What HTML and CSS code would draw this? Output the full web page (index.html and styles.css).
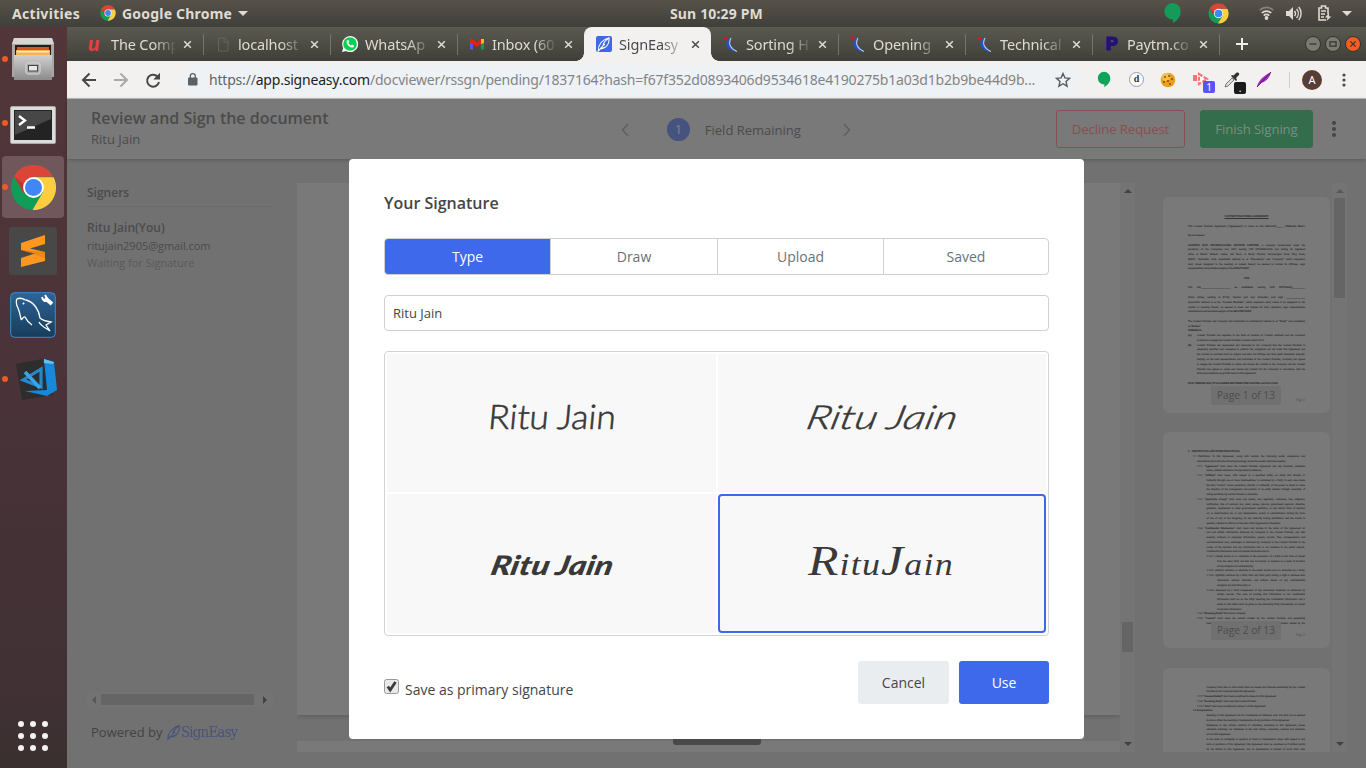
FILE: index.html
```html
<!DOCTYPE html>
<html lang="en">
<head>
<meta charset="utf-8">
<title>SignEasy</title>
<link rel="stylesheet" href="styles.css">
</head>
<body>
<svg width="0" height="0" class="defs">
  <symbol id="chrome" viewBox="0 0 48 48">
    <circle cx="24" cy="24" r="23" fill="#109d58"/>
    <path d="M24 24 4 12.500A23 23 0 0 1 44 13H24z" fill="#dc4437"/>
    <path d="M4 12.500 14 30 24 13z" fill="#dc4437"/>
    <path d="M44.500 13.500A23 23 0 0 1 23 47L34 28 24 13.500z" fill="#ffcd40"/>
    <path d="M4 12.500 14.500 30 16 22z" fill="#b33a2e"/>
    <circle cx="24" cy="24" r="10.600" fill="#fff"/><circle cx="24" cy="24" r="8.700" fill="#4285f4"/>
  </symbol>
  <symbol id="x" viewBox="0 0 10 10"><path d="M1.300 1.300 8.700 8.700M8.700 1.300 1.300 8.700" fill="none" stroke="currentColor" stroke-width="1.700"/></symbol>
  <symbol id="hang" viewBox="0 0 20 24"><path d="M10 1a9 9 0 0 1 9 9.300C19 16 15 20 10.500 23v-3.800A9.100 9.100 0 0 1 10 1z"/></symbol>
  <symbol id="moon" viewBox="0 0 16 16"><path d="M7 2C1 7 4 14 13 15.500 8 12 5 8 7 2z" fill="#2452c9" stroke="#2452c9" stroke-width="1"/><path d="M8 2C4.500 8 8 13 14 15.500" fill="none" stroke="#b9cdf2" stroke-width="1.100"/><path d="m2.500 0 .8 1.500H5L3.800 2.600 4.500 4.500 2.500 3.500.7 4.500 1.200 2.600 0 1.500h1.700z" fill="#e3131c"/></symbol>
  <symbol id="feather" viewBox="0 0 16 18"><path d="M1 17C1 11 4 4 14 1c1 8-4 13-10 13L1 17zM1 17l7-8M14 1C9 5 7 7 7 9M4 14c2-1 4-1 6-2" fill="none" stroke="currentColor" stroke-width="1.300"/><circle cx="8" cy="9" r="1.300" fill="currentColor"/></symbol>
</svg>

<header class="topbar">
  <span class="activities">Activities</span>
  <svg class="app-icon" width="16" height="16"><use href="#chrome"/></svg>
  <span class="app-name">Google Chrome</span><i class="caret"></i>
  <span class="clock">Sun 10:29 PM</span>
  <div class="tray">
    <svg class="t-hang" width="19" height="22"><use href="#hang"/></svg>
    <svg class="t-chrome" width="21" height="21"><use href="#chrome"/></svg>
    <svg class="t-wifi" width="15" height="14" viewBox="0 0 15 14"><g fill="none" stroke-width="1.700"><path d="M.8 4.200a9.500 9.500 0 0 1 13.400 0" stroke="#85837d"/><path d="M2.800 7a6.700 6.700 0 0 1 9.400 0M4.700 9.600a4 4 0 0 1 5.600 0" stroke="#dfdbd2"/></g><circle cx="7.500" cy="12" r="1.900" fill="#dfdbd2"/></svg>
    <svg class="t-vol" width="16" height="15" viewBox="0 0 16 15"><path d="M0 5h3l4-4v13L3 10H0z" fill="#dfdbd2"/><path d="M8.500 5a4 4 0 0 1 0 5M10.600 3a7 7 0 0 1 0 9M12.700 1a10 10 0 0 1 0 13" fill="none" stroke="#dfdbd2" stroke-width="1.400"/></svg>
    <svg class="t-bat" width="15" height="17" viewBox="0 0 15 17"><path d="M11 9V3H8.500V1h-4v2H2v12h7M4 6h5M4 9h4M4 12h3" fill="none" stroke="#dfdbd2" stroke-width="1.600"/><path d="m12 8-4 4.500h2.500L9.500 16l5-4.500H12z" fill="#dfdbd2"/></svg>
    <i class="caret"></i>
  </div>
</header>

<div class="desktop">
  <nav class="dock">
    <div class="slot run"><svg width="44" height="46" viewBox="0 0 44 46"><defs><linearGradient id="met" x2="0" y2="1"><stop stop-color="#d0d0d0"/><stop offset="1" stop-color="#8c8c8c"/></linearGradient></defs><path d="M3 2h38l2 6v33H1V8z" fill="#a8a8a8"/><path d="M3 2h38l2 6H1z" fill="#d6d6d6"/><path d="M4 9h36v11H4z" fill="#2b1a16"/><path d="M6 11h32v8H6z" fill="#d9541e"/><path d="M5 14h34v5H5z" fill="#f3b158"/><path d="M6 15h32v1.500H6z" fill="#fbe6c4"/><path d="M3 19h38v25H3z" fill="url(#met)"/><rect x="15" y="27" width="14" height="11" rx="2" fill="#aaa" stroke="#d9d9d9"/><rect x="17.500" y="29.500" width="9" height="5.500" fill="#e8e8e8" stroke="#444"/></svg></div>
    <div class="slot run term"><svg width="46" height="38" viewBox="0 0 46 38"><rect x=".5" y=".5" width="45" height="37" rx="1.500" fill="#dcdcdc" stroke="#aaa"/><path d="M4 4h38v30H4z" fill="#232323"/><path d="M5 5h36v8L5 29z" fill="#474747"/><path d="m9 10 6 4.500L9 19M17 21.500h8" fill="none" stroke="#fff" stroke-width="2.300"/></svg></div>
    <div class="slot run active"><svg width="47" height="47"><use href="#chrome"/></svg></div>
    <div class="slot"><svg width="48" height="48" viewBox="0 0 48 48"><rect width="48" height="48" rx="3" fill="#484848"/><path d="m12 16 24-8v9l-15 4.500L36 25v9l-24 6v-9l14-4.500L12 23z" fill="#ff9721"/><path d="m12 23 24 2v6z" fill="#d87810" opacity=".5"/></svg></div>
    <div class="slot"><svg width="46" height="46" viewBox="0 0 46 46"><defs><linearGradient id="my" x2="0" y2="1"><stop stop-color="#2d6497"/><stop offset="1" stop-color="#173c5a"/></linearGradient></defs><rect x=".7" y=".7" width="44.600" height="44.600" rx="4" fill="url(#my)" stroke="#3f8cc9"/><path d="M8 16c-2-3-2-8-1-9 3-2 6 0 9 1 8 2 13 10 14 18 2 2 5 3 11 4l-5 3 4 6c-6-4-9-5-11-9M8 16c2 5 2 7 3 11 1 2 2-3 4-2 2 4 4 6 7 8" fill="none" stroke="#fff" stroke-width="1.300"/><path d="M13 11l1 1" stroke="#fff" stroke-width="2"/><path d="m35 6 7 6" stroke="#fff" stroke-width="4"/><path d="M32 5c1 4 3 5 6 3L35 3" fill="none" stroke="#fff" stroke-width="2"/></svg></div>
    <div class="slot run"><svg width="44" height="44" viewBox="0 0 44 44"><path d="m3 7 26-5 11 36-31 5z" fill="#2d2d2e"/><path d="m10 23 18-11v18z" fill="none" stroke="#2489ca" stroke-width="3.200"/><path d="m12 15 15 16" stroke="#3ba2e8" stroke-width="3.600"/><path d="m31 2 10 3 3 28-10 6-22-5 22-1z" fill="#1689db"/><path d="m31 2 10 3-1 2-9-1z" fill="#67bdf5"/></svg></div>
    <div class="apps"><i></i><i></i><i></i><i></i><i></i><i></i><i></i><i></i><i></i></div>
  </nav>

  <section class="window">
    <div class="tabs">
      <div class="tab"><span class="fav udemy">u</span><span class="tt">The Comp</span><svg class="cl"><use href="#x"/></svg></div>
      <div class="tab"><svg class="fav" viewBox="0 0 16 16"><path d="M3.500 2h6l3.500 3.500V15H3.500zM9 2v4h4" fill="none" stroke="#65645e"/></svg><span class="tt">localhost</span><svg class="cl"><use href="#x"/></svg></div>
      <div class="tab"><svg class="fav" viewBox="0 0 16 16"><path d="m0 16 1.200-4A8 8 0 1 1 4 14.900z" fill="#fff"/><circle cx="8" cy="8" r="6.800" fill="#08cf4f"/><path d="M5 4.200c-1.800 3 2.500 8 6 7.300 1.500-.7 1-1.500.8-2L10 8.600l-1 1C8 9.300 6.800 8 6.500 7l.7-.9-.7-2z" fill="#fff"/></svg><span class="tt">WhatsAp</span><svg class="cl"><use href="#x"/></svg></div>
      <div class="tab nosep"><svg class="fav" viewBox="0 0 16 16"><path d="M1 4h3v9.500H1z" fill="#5a55ee"/><path d="M12 4h3v9.500h-3z" fill="#0c9c4c"/><path d="M1 3h2.500L8 6.500 12 3v5L8 11 1 6.500z" fill="#e51f13"/><path d="M12 3h3v4l-3 1z" fill="#fdba08"/></svg><span class="tt">Inbox (60</span><svg class="cl"><use href="#x"/></svg></div>
      <div class="tab on nosep"><span class="fav se"><svg width="14" height="15"><use href="#feather"/></svg></span><span class="tt">SignEasy</span><svg class="cl"><use href="#x"/></svg></div>
      <div class="tab"><svg class="fav"><use href="#moon"/></svg><span class="tt">Sorting H</span><svg class="cl"><use href="#x"/></svg></div>
      <div class="tab"><svg class="fav"><use href="#moon"/></svg><span class="tt">Opening</span><svg class="cl"><use href="#x"/></svg></div>
      <div class="tab"><svg class="fav"><use href="#moon"/></svg><span class="tt">Technical</span><svg class="cl"><use href="#x"/></svg></div>
      <div class="tab"><span class="fav paytm">P</span><span class="tt">Paytm.co</span><svg class="cl"><use href="#x"/></svg></div>
      <svg class="plus" width="12" height="12" viewBox="0 0 12 12"><path d="M6 0v12M0 6h12" stroke="#f0eee6" stroke-width="2"/></svg>
      <div class="winbtns"><i><svg viewBox="0 0 16 16"><path d="M4 8h8"/></svg></i><i><svg viewBox="0 0 16 16"><path d="M4.500 5.500h7v5h-7z"/></svg></i><i class="close"><svg viewBox="0 0 16 16"><path d="m5 5 6 6m0-6-6 6"/></svg></i></div>
    </div>

    <div class="toolbar">
      <svg class="nav" width="90" height="18" viewBox="0 0 90 18"><g fill="none" stroke-width="2"><path d="M15 9H2m6.500-6.500L2 9l6.500 6.500" stroke="#48474a"/><path d="M33 9h13m-6.500-6.500L46 9l-6.500 6.500" stroke="#aaa9a8"/><path d="M76.500 5.500A6 6 0 1 0 78 11" stroke="#48474a"/></g><path d="M79 1.800V8.500h-6.700z" fill="#48474a"/></svg>
      <div class="omni">
        <svg class="lock" width="10" height="13" viewBox="0 0 10 13"><rect y="4.500" width="9.500" height="8" rx="1" fill="#5f6063"/><path d="M2.300 5V3.200a2.500 2.500 0 0 1 5 0V5" fill="none" stroke="#5f6063" stroke-width="1.300"/></svg>
        <span class="url"><b class="s">https://</b><b>app.signeasy.com</b>/docviewer/rssgn/pending/1837164?hash=f67f352d0893406d9534618e4190275b1a03d1b2b9be44d9b...</span>
        <svg class="star" width="16" height="16" viewBox="0 0 16 16"><path d="m8 1.500 1.900 4.400 4.700.4L11 9.500l1.100 4.700L8 11.700l-4.100 2.500L5 9.500 1.400 6.300l4.700-.4z" fill="none" stroke="#5a5a5e" stroke-width="1.400"/></svg>
      </div>
      <div class="exts">
        <svg class="e-hang" width="14" height="17"><use href="#hang"/></svg>
        <span class="e-d">d</span>
        <svg width="16" height="16" viewBox="0 0 16 16"><circle cx="8" cy="8" r="7.300" fill="#e9a11c"/><circle cx="6" cy="5" r="4" fill="#f5c04b"/><g fill="#8a4a0a"><circle cx="5" cy="5" r="1"/><circle cx="9" cy="4" r="1"/><circle cx="12" cy="7" r="1.100"/><circle cx="8" cy="9" r="1.100"/><circle cx="4" cy="10" r="1"/><circle cx="10" cy="12" r="1"/></g></svg>
        <span class="badge-wrap"><svg width="18" height="14" viewBox="0 0 18 14"><path d="M1 3h4v6H1z" fill="#ff6e73"/><path d="m7 2 8 5-8 5z" fill="#fff" stroke="#ff6e73" stroke-width="2.200" stroke-dasharray="4 1.500"/></svg><em>1</em></span>
        <span class="badge-wrap"><svg width="16" height="16" viewBox="0 0 16 16"><path d="m1 15 1-3 6-6 2 2-6 6z" fill="#ddd" stroke="#777"/><path d="m7 4 5 5 1-1-1-2 3-3c1-2-1-3-3-2L9.500 3.500 8 3z" fill="#333"/></svg><em class="dark">.</em></span>
        <svg width="16" height="16" viewBox="0 0 16 16"><path d="M1 15C2 9 7 4 15 0c-1 6-6 10-10 11z" fill="#a32bc4"/><path d="M1 15 15 0" stroke="#5b1070"/></svg>
        <i class="vsep"></i><span class="avatar">A</span>
        <svg width="4" height="14" viewBox="0 0 4 14" fill="#48484a"><circle cx="2" cy="2" r="1.600"/><circle cx="2" cy="7" r="1.600"/><circle cx="2" cy="12" r="1.600"/></svg>
      </div>
    </div>

    <main class="page">
      <div class="head">
        <div class="heading"><h1>Review and Sign the document</h1><p>Ritu Jain</p></div>
        <div class="fields"><svg width="8" height="14" viewBox="0 0 8 14"><path d="M7 1 1.500 7 7 13"/></svg><b>1</b><span>Field Remaining</span><svg width="8" height="14" viewBox="0 0 8 14"><path d="m1 1 5.500 6L1 13"/></svg></div>
        <div class="actions"><span class="decline">Decline Request</span><span class="finish">Finish Signing</span><svg width="4" height="16" viewBox="0 0 4 16" fill="#454545"><circle cx="2" cy="2" r="2"/><circle cx="2" cy="8" r="2"/><circle cx="2" cy="14" r="2"/></svg></div>
      </div>
      <div class="cols">
        <aside class="signers">
          <h2>Signers</h2>
          <h3>Ritu Jain(You)</h3><p>ritujain2905@gmail.com</p><p class="wait">Waiting for Signature</p>
          <div class="hscroll"><i class="la"></i><i class="bar"></i><i class="ra"></i></div>
          <div class="powered">Powered by <svg width="14" height="17"><use href="#feather"/></svg><span>SignEasy</span></div>
        </aside>
        <div class="doc"><div class="sheet"></div><div class="sheet next"></div></div>
        <div class="vscroll d"><i class="ua"></i><i class="bar"></i><i class="da"></i></div>
        <div class="thumbs">
          <div class="thumb"><div class="txt">
            <p class="c b"><u>CONTENT PROVIDER AGREEMENT</u></p><p></p>
            <p class="j">This Content Provider Agreement ("<b>Agreement</b>") is made on this 08/03/2021_____ ("<b>Effective Date</b>")</p><p></p>
            <p>By and between:</p><p></p>
            <p class="j"><b>SORTING HAT TECHNOLOGIES PRIVATE LIMITED</b>, a company incorporated under the</p>
            <p class="j">provisions of the Companies Act, 2013 bearing CIN U72900KA2015 and having its registered</p>
            <p class="j">office at Maruti Infotech Centre, 3rd Floor, A Block, Domlur, Koramangala Inner Ring Road,</p>
            <p class="j">560071, Karnataka, India (hereinafter referred to as "Unacademy" and "Company" which expression</p>
            <p class="j">shall, unless repugnant to the meaning or context thereof, be deemed to include its affiliates, legal</p>
            <p>representatives and permitted assigns) of the <b>FIRST PART</b>;</p><p></p>
            <p class="c b">AND</p><p></p>
            <p class="j">Ritu Jain_______________________ <b>an individual</b>, bearing PAN BIFPJ4080Q__________</p><p></p>
            <p class="j">Indian citizen, residing at H-152, Jawahar puri near Ambedkar park Agra _______________</p>
            <p class="j">(hereinafter referred to as the "<b>Content Provider</b>", which expression shall, unless it be repugnant to the</p>
            <p class="j">context or meaning thereof, be deemed to mean and include his heirs, executors, legal representatives</p>
            <p>administrators and permitted assigns) of the <b>SECOND PART</b>.</p><p></p>
            <p class="j">The Content Provider and Company shall hereinafter be individually referred to as "<b>Party</b>" and collectively</p>
            <p>as "<b>Parties</b>".</p><p class="b">WHEREAS:</p>
            <p class="i1 j n" data-n="(A)">Content Provider has expertise in the field of creation of Content (defined) and the Company</p><p class="i1">is desirous to engage the Content Provider to create Content for it.</p>
            <p class="i1 j n" data-n="(B)">Content Provider has represented and warranted to the Company that the Content Provider is</p><p class="i1 j">adequately qualified and competent to perform the obligations set out under this Agreement and</p><p class="i1 j">the Content so provided shall be original and shall not infringe any third party intellectual property.</p><p class="i1 j">Relying on the said representations and warranties of the Content Provider, Company has agreed</p><p class="i1 j">to engage the Content Provider to create and license the Content to the Company and the Content</p><p class="i1 j">Provider has agreed to create and license the Content for the Company in accordance with the</p><p class="i1">terms and conditions as set forth below in this Agreement.</p><p></p>
            <p class="b">NOW THEREFORE, IT IS AGREED BETWEEN THE PARTIES AS FOLLOWS:</p>
          </div><span class="pn">Page |1</span><span class="label">Page 1 of 13</span></div>
          <div class="thumb"><div class="txt">
            <p class="b">1. &nbsp; DEFINITIONS AND INTERPRETATIONS</p>
            <p class="i0 j">1.1 Definitions: In this Agreement, along with recitals, the following words, expressions and</p><p class="i1">abbreviations shall have the following meanings, unless the context otherwise requires:</p>
            <p class="i1 j">1.1.1. "<b>Agreement</b>" shall mean the Content Provider Agreement and any annexure, schedules</p><p class="i2">hereto, whether attached or incorporated by reference;</p>
            <p class="i1 j">1.1.2. "<b>Affiliate</b>" shall mean, with respect to a specified entity, an entity that directly or</p><p class="i2 j">indirectly through one or more intermediaries, is controlled by a Party, in each case where</p><p class="i2 j">the term "control" means possession, directly or indirectly, of the power to direct or cause</p><p class="i2 j">the direction of the management and policies of an entity whether through ownership of</p><p class="i2">voting securities, by contract interest or otherwise.</p>
            <p class="i1 j">1.1.3. "<b>Applicable Law(s)</b>" shall mean any statute, law, regulation, ordinance, rule, judgment,</p><p class="i2 j">notification, rule of common law, order, decree, bye-law, government approval, directive,</p><p class="i2 j">guideline, requirement or other governmental restriction, or any similar form of decision</p><p class="i2 j">of, or determination by, or any interpretation, policy or administration having the force</p><p class="i2 j">of law of any of the foregoing, by any authority having jurisdiction over the matter in</p><p class="i2">question, whether in effect as of the date of this Agreement or thereafter;</p>
            <p class="i1 j">1.1.4. "<b>Confidential Information</b>" shall mean and include in the terms of this Agreement all</p><p class="i2 j">oral and written information disclosed by Company to the Content Provider, any data</p><p class="i2 j">material, business or employee information, papers, records, files, correspondence and</p><p class="i2 j">communications sent, exchanged or disclosed by Company to the Content Provider in the</p><p class="i2 j">course of the Services and any information that is not available in the public domain.</p><p class="i2">Confidential Information shall not include information that is</p>
            <p class="i2 j">1.1.4.1. already known to or otherwise in the possession of a Party at the time of receipt</p><p class="i3 j">from the other Party and that was not known or received as a result of violation</p><p class="i3">of any obligation of confidentiality;</p><p class="i2 j">1.1.4.2. publicly available or otherwise in the public domain prior to disclosure by a Party;</p><p class="i2 j">1.1.4.3. rightfully obtained by a Party from any third party having a right to disclose such</p><p class="i3 j">information without restriction and without breach of any confidentiality</p><p class="i3">obligation by such third party; or</p><p class="i2 j">1.1.4.4. developed by a Party independent of any disclosures hereunder as evidenced by</p><p class="i3 j">written records. The onus of proving that information is not Confidential</p><p class="i3 j">Information shall be on the Party receiving the Confidential Information and a</p><p class="i3 j">notice to this effect shall be given to the disclosing Party immediately on receipt</p><p class="i3">of any such information.</p>
            <p class="i1">1.1.5. "<b>Disclosing Party</b>" shall mean Company.</p><p class="i1 j">1.1.6. "<b>Content</b>" shall mean the content created by the Content Provider and perpetually</p><p class="i2 j">licensed to the Company in accordance with the terms, and information shared by the</p>
          </div><span class="pn">Page |2</span><span class="label">Page 2 of 13</span></div>
          <div class="thumb"><div class="txt">
            <p class="i2 j">Company from time to time which shall be created and licensed exclusively by the Content</p><p class="i2">Provider to the Company under this Agreement.</p><p class="i1">1.1.7. "<b>General Default</b>" shall mean as defined in clause 9 of this Agreement</p><p class="i1">1.1.8. "<b>Receiving Party</b>" shall mean the Content Provider</p><p class="i1">1.1.9. "<b>Term</b>" shall mean as defined in clause 11 of this Agreement</p><p class="i0 b">1.2 Interpretation</p>
            <p class="i2 j">Headings in this Agreement are for convenience of reference only and shall not be deemed</p><p class="i2">to alter or affect the meaning or interpretation of any provision of this Agreement.</p><p class="i2 j">References to any articles, sections of schedules, annexures to this Agreement, unless</p><p class="i2 j">otherwise indicated, are references to the said articles, annexures, sections and schedules</p><p class="i2">of or to this Agreement.</p><p class="i2 j">In the event an ambiguity or question of intent or interpretation arises with respect to any</p><p class="i2 j">term or provision of this Agreement, this Agreement shall be construed as if drafted jointly</p><p class="i2 j">by the Parties to this Agreement, and no presumption or burden of proof shall arise</p>
          </div></div>
        </div>
        <div class="vscroll t"><i class="ua"></i><i class="bar"></i><i class="da"></i></div>
      </div>
      <div class="grip"></div>

      <section class="modal">
        <h2>Your Signature</h2>
        <div class="modes"><span class="sel">Type</span><span>Draw</span><span>Upload</span><span>Saved</span></div>
        <div class="input">Ritu Jain</div>
        <div class="styles">
          <div class="cell"><span class="sig s1">Ritu Jain</span></div>
          <div class="cell"><span class="sig s2">Ritu Jain</span></div>
          <div class="cell"><span class="sig s3">Ritu Jain</span></div>
          <div class="cell chosen"><span class="sig s4"><b>R</b>itu<b>J</b>ain</span></div>
        </div>
        <div class="foot">
          <svg class="check" width="15" height="15" viewBox="0 0 15 15"><rect x=".5" y=".5" width="14" height="14" rx="2" fill="#e9e9e9" stroke="#999"/><path d="m3.800 7.500 2.400 3.500L11.500 3" fill="none" stroke="#3b3b3b" stroke-width="2.800"/></svg>
          <span class="save">Save as primary signature</span>
          <span class="btn cancel">Cancel</span><span class="btn use">Use</span>
        </div>
      </section>
    </main>
  </section>
</div>
</body>
</html>
```
FILE: styles.css
```css
* { box-sizing: border-box; }
body { margin: 0; width: 1366px; height: 768px; overflow: hidden; font-family: "Open Sans", sans-serif; display: flex; flex-direction: column; }
h1, h2, h3, p { margin: 0; }
.defs { position: absolute; }
svg { flex: none; display: block; }

.topbar { height: 27px; flex: none; display: flex; align-items: center; background: linear-gradient(#575249, #403f3a); color: #dfdbd2; font: bold 14px "Noto Sans", sans-serif; padding: 0 0 1px 12px; }
.activities { width: 88px; }
.app-icon { margin-right: 6px; }
.app-name { width: 110px; white-space: nowrap; letter-spacing: 0.2px; }
.caret { border: 5px solid transparent; border-top-color: #dfdbd2; border-bottom: 0; margin-left: 6px; }
.clock { margin-left: 422px; font-size: 14px; white-space: nowrap; letter-spacing: 0.15px; }
.activities { letter-spacing: 0.3px; }
.tray { margin-left: auto; display: flex; align-items: center; padding-right: 14px; }
.t-hang { fill: #149b59; margin-right: 26px; }
.t-chrome { margin-right: 30px; }
.t-wifi { margin-right: 12px; }
.t-vol { margin-right: 15px; }
.t-bat { margin-right: 4px; }

.desktop { flex: 1; display: flex; min-height: 0; }
.dock { width: 67px; flex: none; background: linear-gradient(#523639, #493339 50%, #3f3033 93%, #3a3030); display: flex; flex-direction: column; }
.slot { height: 64px; display: flex; align-items: center; justify-content: center; position: relative; padding-right: 1px; }
.slot:nth-child(6) { padding-left: 2px; padding-right: 0; }
.slot.run::before { content: ""; position: absolute; left: 2px; top: 29px; width: 6px; height: 6px; border-radius: 50%; background: #ee5a24; }
.slot.active { height: 62px; width: 62px; margin: 1px 0 1px 2px; padding: 0; background: #6f575c; border-radius: 4px; }
.slot.active::before { left: 0; top: 28px; }
.term svg { margin-top: 4px; }
.apps { margin: auto 0 17px 18px; display: grid; grid-template-columns: repeat(3, 6px); gap: 6px; }
.apps i { height: 6px; border-radius: 50%; background: #f4f2f2; }

.window { flex: 1; display: flex; flex-direction: column; min-width: 0; }
.tabs { height: 34px; flex: none; display: flex; padding-left: 9px; background: linear-gradient(#5b5a50, #3f3f39); color: #dfdbd2; font: 14.5px "Noto Sans", sans-serif; }
.tab { width: 127px; padding-left: 12px; display: flex; align-items: center; position: relative; }
.tab::after { content: ""; position: absolute; right: -1px; top: 7px; width: 1px; height: 21px; background: #75746c; }
.tab.nosep::after { display: none; }
.tab.on { background: #f2f1f0; color: #464b50; border-radius: 8px 8px 0 0; }
.tab.on::before { content: ""; position: absolute; left: -8px; right: -8px; bottom: 0; height: 8px; background: radial-gradient(circle at 0 0, transparent 7.5px, #f2f1f0 8px) 0 0 / 8px 8px no-repeat, radial-gradient(circle at 100% 0, transparent 7.5px, #f2f1f0 8px) 100% 0 / 8px 8px no-repeat; }
.fav { width: 16px; height: 16px; margin-right: 7px; flex: none; }
.udemy { color: #ee3a43; font: italic 900 21px/14px "Lato", sans-serif; }
.paytm { color: #20127a; font: 900 19px/16px "Roboto", sans-serif; text-align: center; -webkit-text-stroke: 1px; }
.se { background: #3e69e6; color: #fff; border-radius: 2px; padding: 1px; }
.tt { width: 66px; overflow: hidden; white-space: nowrap; letter-spacing: -0.15px; -webkit-mask-image: linear-gradient(90deg, #000 65%, transparent); mask-image: linear-gradient(90deg, #000 65%, transparent); }
.cl { width: 9px; height: 9px; margin-left: 6px; }
.plus { margin: 11px 0 0 17px; }
.winbtns { display: flex; gap: 4px; margin: 9px 0 0 57px; }
.winbtns i { width: 16px; height: 16px; border-radius: 50%; background: #7b7a73; border: 1px solid #33332e; }
.winbtns svg { width: 14px; height: 14px; fill: none; stroke: #34342f; stroke-width: 1.4; }
.winbtns .close { background: #f15d22; }

.toolbar { height: 38px; flex: none; background: #f2f1f0; border-bottom: 1px solid #bcbebe; display: flex; align-items: center; padding-left: 14px; }
.nav { margin-right: 10px; }
.omni { display: flex; align-items: center; width: 899px; height: 30px; background: #eff2f5; border-radius: 15px; padding-left: 7px; }
.lock { margin-right: 11px; }
.url { width: 830px; white-space: nowrap; overflow: hidden; color: #808489; font: 14px "Noto Sans", sans-serif; letter-spacing: -0.2px; }
.url b { font-weight: 400; color: #222; }
.url .s { color: #606468; }
.star { margin-left: 16px; }
.exts { display: flex; align-items: center; position: absolute; right: 20px; top: 61px; height: 37px; gap: 16px; }
.e-hang { fill: #0fa35b; margin-right: 2px; }
.e-d { width: 15px; height: 15px; border: 1px solid #a58fc2; border-radius: 50%; background: #fff; font: bold 10px/12px "Liberation Serif", serif; text-align: center; color: #333; }
.badge-wrap { width: 16px; height: 16px; position: relative; }
.badge-wrap em { position: absolute; left: 11px; top: 9px; width: 12px; height: 12px; border-radius: 2px; background: #5a52f5; color: #fff; font: 10px/12px "Noto Sans", sans-serif; text-align: center; }
.badge-wrap .dark { background: #1b1b1d; left: 10px; top: 10px; }
.vsep { width: 1px; height: 16px; background: #cfcfcf; margin-left: 1px; }
.avatar { width: 20px; height: 20px; margin: 0 4px 0 -4px; border-radius: 50%; background: #573d35; color: #fff; font: 11px/20px "Noto Sans", sans-serif; text-align: center; }

.page { flex: 1; min-height: 0; display: flex; flex-direction: column; background: #717171; color: #4b4b4b; position: relative; }
.head { height: 60px; flex: none; background: #797979; box-shadow: 0 1px 4px rgba(0,0,0,.22); display: flex; position: relative; }
.heading { width: 554px; padding: 8px 0 0 24px; }
.heading h1 { font-size: 16px; line-height: 22px; font-weight: 600; }
.heading p { font-size: 13px; line-height: 20px; }
.fields { display: flex; align-items: center; font-size: 13px; width: 230px; padding-top: 1px; }
.fields b { margin: 0 15px 0 38px; width: 23px; height: 23px; border-radius: 50%; background: #46537f; color: #828282; font-weight: 400; line-height: 23px; text-align: center; }
.fields span { width: 97px; white-space: nowrap; margin-right: 42px; }
.fields svg { fill: none; stroke: #606060; stroke-width: 1.6; }
.actions { display: flex; align-items: center; margin-left: auto; font-size: 13.2px; padding-right: 30px; }
.actions span { height: 38px; line-height: 36px; border-radius: 3px; text-align: center; border: 1px solid; white-space: nowrap; letter-spacing: -0.1px; }
.decline { width: 129px; color: #884f50; margin-right: 15px; }
.finish { width: 113px; color: #788f80; background: #346d4b; border-color: #346d4b !important; margin-right: 19px; }

.cols { flex: 1; min-height: 0; display: flex; padding-top: 24px; }
.signers { width: 230px; flex: none; padding: 0 24px 0 20px; display: flex; flex-direction: column; }
.signers h2 { font-size: 12px; line-height: 20px; font-weight: 600; padding-bottom: 3px; border-bottom: 1px solid #6b6b6b; margin-bottom: 12px; }
.signers h3 { font-size: 12px; line-height: 18px; font-weight: 600; }
.signers p { font-size: 11px; line-height: 17px; letter-spacing: -0.03px; }
.signers .wait { color: #5a5a5a; line-height: 18px; }
.hscroll { margin-top: 420px; height: 15px; background: #737373; display: flex; align-items: center; padding-left: 5px; }
.hscroll .bar { width: 153px; height: 11px; background: #656565; margin: 0 9px 0 5px; }
.la, .ra { border: 4px solid transparent; width: 0; height: 0; }
.la { border-right-color: #575757; border-left: 0; }
.ra { border-left-color: #414141; border-right: 0; }
.powered { display: flex; align-items: center; font-size: 13px; line-height: 20px; margin: 15px 0 0 4px; color: #434343; }
.powered svg { color: #48537d; margin-left: 5px; }
.powered span { font: 300 15.5px "DejaVu Serif", serif; color: #48537d; letter-spacing: -1px; transform: scaleX(.87); transform-origin: left; }
.doc { width: 823px; height: 569px; flex: none; overflow: hidden; }
.sheet { height: 532px; background: #797979; box-shadow: 0 2px 4px rgba(0,0,0,.15); margin-bottom: 26px; }
.sheet.next { height: 11px; box-shadow: none; }
.vscroll { width: 15px; height: 569px; flex: none; background: #747474; display: flex; flex-direction: column; align-items: center; padding: 6px 0; }
.vscroll .bar { width: 11px; background: #656565; }
.d .bar { height: 30px; margin-top: 429px; }
.t .bar { height: 100px; margin-top: 5px; }
.ua, .da { width: 0; height: 0; border: 4px solid transparent; }
.ua { border-bottom-color: #414141; border-top: 0; }
.t .ua { border-bottom-color: #585858; }
.da { border-top-color: #414141; border-bottom: 0; margin-top: auto; }
.thumbs { width: 197px; height: 569px; flex: none; padding: 14px 2px 0 28px; overflow: hidden; }
.thumb { height: 216px; margin-bottom: 19.3px; background: #797979; border-radius: 6px; position: relative; padding: 18px 25px 0; }
.txt { font: 2.55px/4.77px "Liberation Serif", serif; color: #343434; text-rendering: geometricPrecision; -webkit-text-stroke: .12px; }
.txt p { height: 4.77px; white-space: nowrap; }
.txt .j { white-space: normal; text-align: justify; text-align-last: justify; }
.txt .c { text-align: center; }
.txt .b { font-weight: bold; }
.i0 { padding-left: 5px; }
.i1 { padding-left: 9px; }
.i2 { padding-left: 18.5px; }
.i3 { padding-left: 29px; }
.n { position: relative; }
.n::before { content: attr(data-n); position: absolute; left: 0; top: 0; font-weight: bold; text-align-last: left; }
.label { position: absolute; left: 48px; bottom: 8px; width: 70px; height: 19px; border-radius: 3px; background: #707070; font-size: 10.2px; line-height: 19px; text-align: center; color: #4d4d4d; }
.pn { position: absolute; right: 25px; bottom: 11px; font: 3px "Liberation Serif", serif; }
.grip { position: absolute; left: 606px; top: 636px; width: 88px; height: 10px; border-radius: 3px; background: #494949; }

.modal { position: absolute; left: 282px; top: 60px; width: 735px; height: 580px; background: #fff; border-radius: 4px; padding: 32px 35px 35px; color: #454545; display: flex; flex-direction: column; }
.modal h2 { font-size: 16px; line-height: 24px; font-weight: 600; margin-bottom: 23px; }
.modes { display: grid; grid-template-columns: 165px 167px 166px 1fr; height: 37px; border: 1px solid #ced0d2; border-radius: 4px; overflow: hidden; flex: none; font-size: 14px; color: #66737b; }
.modes span { text-align: center; line-height: 36px; border-left: 1px solid #ced0d2; }
.modes .sel { background: #3e69eb; color: #fff; border-left: 0; }
.input { margin-top: 20px; height: 36px; flex: none; border: 1px solid #ced0d2; border-radius: 4px; padding-left: 8px; font-size: 13px; line-height: 34px; }
.styles { margin-top: 20px; height: 285px; flex: none; border: 1px solid #cfd4da; border-radius: 4px; padding: 2px; display: grid; grid-template-columns: 329px 328px; grid-template-rows: 138px 139px; gap: 2px; }
.cell { background: #f8f8f8; display: flex; align-items: center; justify-content: center; }
.chosen { border: 2px solid #3e69e6; border-radius: 4px; }
.sig { color: #393939; white-space: nowrap; font-style: italic; font-size: 34px; line-height: 40px; }
.s1 { font-family: "Lato", cursive; font-style: normal; font-weight: 300; transform: translate(1px, -7px) scaleX(1.04) skewX(-5deg); -webkit-text-stroke: .6px; }
.s2 { font-family: "Lato", cursive; font-weight: 300; transform: translate(1px, -7px) scaleX(1.32) skewX(-10deg); -webkit-text-stroke: .5px; font-size: 33px; }
.s3 { font-family: "Lato", cursive; font-weight: 900; font-size: 27px; transform: translate(1px, 1px) scaleX(1.23) skewX(-10deg); }
.s4 { font-family: "Liberation Serif", cursive; font-size: 31px; transform: translate(-1px, -1px) scaleX(1.16); letter-spacing: 1px; }
.s4 b { font-weight: 400; font-size: 43px; }
.foot { display: flex; margin-top: 25px; height: 43px; font-size: 14px; }
.check { margin: 18px 6px 0 0; }
.save { padding-top: 19px; line-height: 19px; }
.btn { height: 43px; line-height: 43px; border-radius: 3px; text-align: center; }
.cancel { width: 91px; margin: 0 10px 0 auto; background: #e9edf0; }
.use { width: 90px; background: #3e69eb; color: #fff; }
```
